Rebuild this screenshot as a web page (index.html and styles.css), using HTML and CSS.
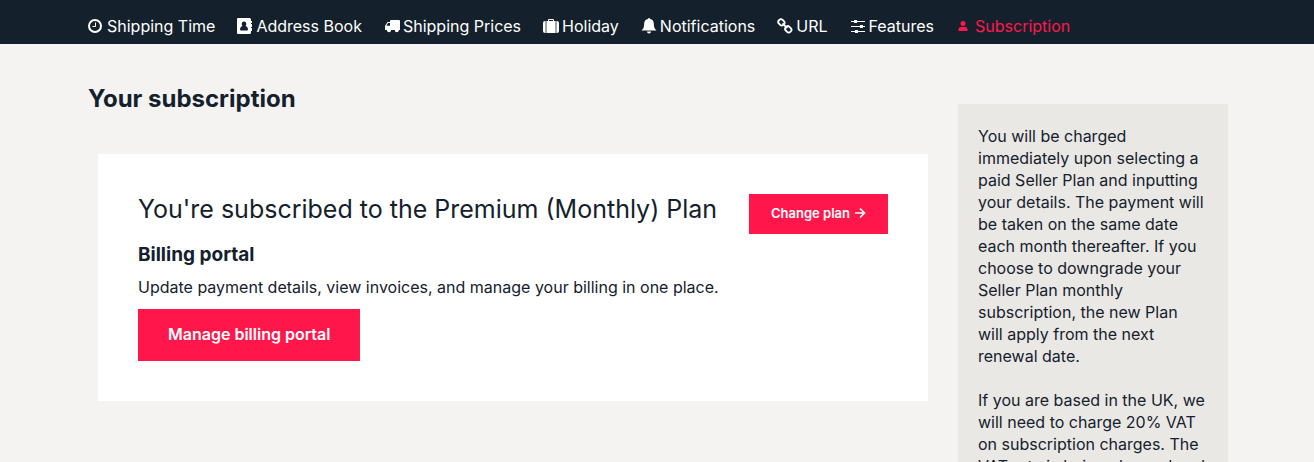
FILE: index.html
```html
<!DOCTYPE html>

<html lang="en">

<head>

    <meta charset="UTF-8">
    <meta name="viewport" content="width=device-width, initial-scale=1.0">

    <title>Your subscription</title>

    <link rel="stylesheet" href="styles.css">

</head>

<body>

    <nav class="settings-nav">
        <a href="#">
            <svg class="icon" viewBox="0 0 16 16"><circle cx="7" cy="8" r="6" fill="none" stroke="currentColor" stroke-width="2"/><path d="M7.500 4.500V8.500H4.500" fill="none" stroke="currentColor"/></svg>
            Shipping Time
        </a>
        <a href="#">
            <svg class="icon" viewBox="0 0 16 16"><path fill-rule="evenodd" d="M1 0h11.500a1.500 1.500 0 0 1 1.500 1.500V3h1v2h-1v1h1v3h-1v1h1v3h-1v1.500a1.500 1.500 0 0 1-1.500 1.500H1a1 1 0 0 1-1-1V1a1 1 0 0 1 1-1zM7 3.500C5.500 3.500 4.700 4.500 4.700 6c0 .9.3 1.500.8 2C4 8.300 3.200 9.500 3 11.500q0 1 1 1h6q1 0 1-1c-.2-2-1-3.200-2.500-3.500.5-.5.8-1.100.8-2C9.300 4.500 8.500 3.500 7 3.500z"/></svg>
            Address Book
        </a>
        <a href="#">
            <svg class="icon" viewBox="0 0 16 16"><path fill-rule="evenodd" d="M7 2h8a1 1 0 0 1 1 1v9h-1.200a2 2 0 0 1-4 0H7a2 2 0 0 1-4 0H1V8l2.500-4H6V3a1 1 0 0 1 1-1zM4 5L2.400 7.800H6V5z"/><circle cx="5" cy="12.500" r="1.700"/><circle cx="12.700" cy="12.500" r="1.700"/></svg>
            Shipping Prices
        </a>
        <a href="#">
            <svg class="icon" viewBox="0 0 16 16"><path fill-rule="evenodd" d="M5 3V2q0-1 1-1h4q1 0 1 1v1h1v12H4V3zM6 3h4V2H6z"/><path d="M2 3v12q-2 0-2-2V5q0-2 2-2zM14 3v12q2 0 2-2V5q0-2-2-2z"/><path opacity=".6" d="M2 3h2v12H2zM12 3h2v12h-2z"/></svg>
            Holiday
        </a>
        <a href="#">
            <svg class="icon" viewBox="0 0 16 16"><path d="M7 1a1 1 0 0 1 2 0c2.500.5 3.800 2.300 3.800 4.500 0 4 1 5.500 2.700 7H.5C2.200 11 3.200 9.500 3.200 5.500 3.200 3.300 4.500 1.500 7 1zM6 13.500h4a2 2 0 0 1-4 0z"/></svg>
            Notifications
        </a>
        <a href="#">
            <svg class="icon" viewBox="0 0 16 16"><g fill="none" stroke="currentColor" stroke-width="1.800"><rect x="1.200" y="1.700" width="6.400" height="5.200" rx="2.300" transform="rotate(45 4.400 4.300)"/><rect x="8.100" y="8.700" width="6.400" height="5.200" rx="2.300" transform="rotate(45 11.300 11.300)"/><path d="M5.500 5.500l4.800 4.600"/></g></svg>
            URL
        </a>
        <a href="#">
            <svg class="icon" viewBox="0 0 16 16"><path d="M1 3h14v1H1zM1 8h14v1H1zM1 13h14v1H1zM4 2h3v3H4zM10 7h3v3h-3zM5 12h3v3H5z"/></svg>
            Features
        </a>
        <a class="active" href="#">
            <svg class="icon" viewBox="0 0 16 16"><circle cx="7" cy="5.500" r="2.500"/><path d="M2.500 13v-1.500Q2.500 9 5 9h4q2.500 0 2.500 2.500V13z"/></svg>
            Subscription
        </a>
    </nav>

    <div class="container">

        <main>
            <h1>Your subscription</h1>

            <section class="card">
                <div class="plan">
                    <h2>You're subscribed to the Premium (Monthly) Plan</h2>
                    <button class="btn btn-small" type="button">
                        Change plan
                        <svg class="arrow" viewBox="0 0 12 12"><path d="M1 6h9M6 1.500L10.500 6 6 10.500" fill="none" stroke="currentColor" stroke-width="1.700"/></svg>
                    </button>
                </div>
                <h3>Billing portal</h3>
                <p>Update payment details, view invoices, and manage your billing in one place.</p>
                <button class="btn" type="button">Manage billing portal</button>
            </section>
        </main>

        <aside>
            <p>You will be charged immediately upon selecting a paid Seller Plan and inputting your details. The payment will be taken on the same date each month thereafter. If you choose to downgrade your Seller Plan monthly subscription, the new Plan will apply from the next renewal date.</p>
            <p>If you are based in the UK, we will need to charge 20% VAT on subscription charges. The VAT rate is being charged and</p>
        </aside>

    </div>

</body>

</html>
```
FILE: styles.css
```css
* {
    box-sizing: border-box;
}

body {
    margin: 0;
    background-color: #f4f3f1;
    color: #14212d;
    font-family: Inter, sans-serif;
    font-size: 16px;
    line-height: 22px;
}

h1,
h2,
h3,
p {
    margin: 0;
}

.settings-nav {
    display: flex;
    gap: 22px;
    padding: 15px 86px 7px 88px;
    background-color: #14212d;
}

.settings-nav a {
    display: flex;
    align-items: center;
    gap: 3px;
    color: white;
    text-decoration: none;
    white-space: nowrap;
}

.settings-nav .active {
    color: #ff174b;
}

.icon {
    width: 16px;
    height: 16px;
    fill: currentColor;
}

.container {
    display: flex;
    align-items: flex-start;
    gap: 30px;
    padding: 40px 86px 0 88px;
}

main {
    flex: 1;
}

h1 {
    font-size: 24px;
    line-height: 30px;
}

.card {
    margin: 40px 0 0 10px;
    padding: 40px;
    background-color: white;
}

.plan {
    display: flex;
    justify-content: space-between;
    align-items: flex-start;
}

h2 {
    font-size: 25px;
    font-weight: normal;
    line-height: 30px;
}

h3 {
    margin-top: 9px;
    margin-bottom: 9px;
    font-size: 19px;
    line-height: 24px;
}

.btn {
    margin-top: 11px;
    padding: 14px 30px 16px;
    border: none;
    background-color: #ff174b;
    color: white;
    font-family: inherit;
    font-size: 16px;
    font-weight: 600;
    line-height: 22px;
    cursor: pointer;
}

.btn-small {
    display: flex;
    align-items: center;
    gap: 4px;
    margin-top: 0;
    padding: 8px 22px 10px;
    font-size: 13px;
    white-space: nowrap;
}

.arrow {
    width: 12px;
    height: 12px;
}

aside {
    width: 270px;
    margin-top: 20px;
    padding: 21px 22px 20px 20px;
    background-color: #eae8e4;
}

aside p {
    margin-bottom: 22px;
}
```
